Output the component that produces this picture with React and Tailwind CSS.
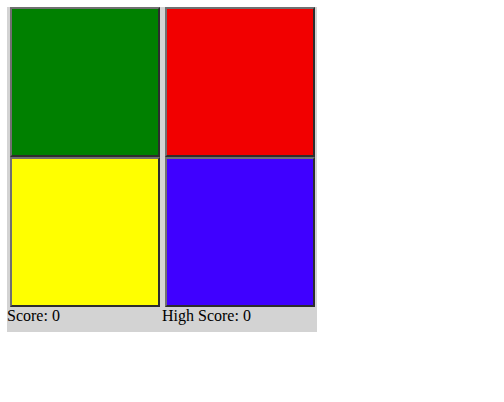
import React, { useState } from "react";

const pads = [
  { id: "green", color: "bg-[#008000]" },
  { id: "red", color: "bg-[#f20000]" },
  { id: "yellow", color: "bg-[#ffff00]" },
  { id: "blue", color: "bg-[#3f00ff]" },
];

export default function App() {
  const [score] = useState(0);
  const [highScore] = useState(0);

  return (
    <div className="w-[504px] h-[402px] bg-white pt-[7px] pl-[7px] font-['Liberation_Serif',serif] text-black">
      <div className="w-[310px] h-[325px] bg-[#d3d3d3] flex flex-col">
        <div className="grid grid-cols-[150px_150px] gap-x-[5px] pl-[3px]">
          {pads.map((p) => (
            <button
              key={p.id}
              className={`w-[150px] h-[150px] border-2 border-t-[#707070] border-l-[#707070] border-b-[#2d2d2d] border-r-[#2d2d2d] ${p.color}`}
            />
          ))}
        </div>
        <div className="flex text-[16px] leading-[18px] h-[18px]">
          <p className="w-[155px]">Score: {score}</p>
          <p>High Score: {highScore}</p>
        </div>
      </div>
    </div>
  );
}
